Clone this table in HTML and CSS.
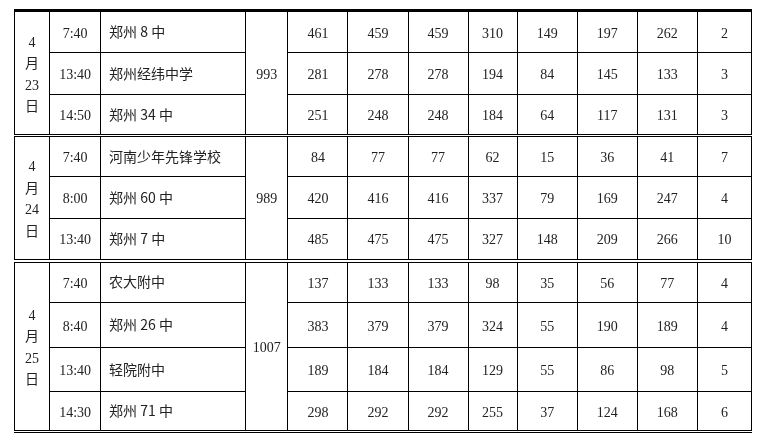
FILE: index.html
```html
<!DOCTYPE html>
<html lang="zh">
<head>
<meta charset="utf-8">
<title>考试安排</title>
<link rel="stylesheet" href="styles.css">
</head>
<body>
<table class="grid">
<colgroup>
<col class="c-date"><col class="c-time"><col class="c-name"><col class="c-total">
<col class="c-n"><col class="c-n"><col class="c-n"><col class="c-n2"><col class="c-n"><col class="c-n"><col class="c-n"><col class="c-last">
</colgroup>
<tbody class="grp g1">
<tr class="r42"><td class="date" rowspan="3">4<br>月<br>23<br>日</td><td>7:40</td><td class="name">郑州 8 中</td><td rowspan="3">993</td><td>461</td><td>459</td><td>459</td><td>310</td><td>149</td><td>197</td><td>262</td><td>2</td></tr>
<tr class="r42"><td>13:40</td><td class="name">郑州经纬中学</td><td>281</td><td>278</td><td>278</td><td>194</td><td>84</td><td>145</td><td>133</td><td>3</td></tr>
<tr class="r41"><td>14:50</td><td class="name">郑州 34 中</td><td>251</td><td>248</td><td>248</td><td>184</td><td>64</td><td>117</td><td>131</td><td>3</td></tr>
</tbody>
<tbody class="grp g2">
<tr class="r41"><td class="date" rowspan="3">4<br>月<br>24<br>日</td><td>7:40</td><td class="name">河南少年先锋学校</td><td rowspan="3">989</td><td>84</td><td>77</td><td>77</td><td>62</td><td>15</td><td>36</td><td>41</td><td>7</td></tr>
<tr class="r42"><td>8:00</td><td class="name">郑州 60 中</td><td>420</td><td>416</td><td>416</td><td>337</td><td>79</td><td>169</td><td>247</td><td>4</td></tr>
<tr class="r42"><td>13:40</td><td class="name">郑州 7 中</td><td>485</td><td>475</td><td>475</td><td>327</td><td>148</td><td>209</td><td>266</td><td>10</td></tr>
</tbody>
<tbody class="grp g3">
<tr class="r42"><td class="date" rowspan="4">4<br>月<br>25<br>日</td><td>7:40</td><td class="name">农大附中</td><td rowspan="4">1007</td><td>137</td><td>133</td><td>133</td><td>98</td><td>35</td><td>56</td><td>77</td><td>4</td></tr>
<tr class="r45"><td>8:40</td><td class="name">郑州 26 中</td><td>383</td><td>379</td><td>379</td><td>324</td><td>55</td><td>190</td><td>189</td><td>4</td></tr>
<tr class="r44"><td>13:40</td><td class="name">轻院附中</td><td>189</td><td>184</td><td>184</td><td>129</td><td>55</td><td>86</td><td>98</td><td>5</td></tr>
<tr class="r40"><td>14:30</td><td class="name">郑州 71 中</td><td>298</td><td>292</td><td>292</td><td>255</td><td>37</td><td>124</td><td>168</td><td>6</td></tr>
</tbody>
</table>
</body>
</html>
```

FILE: styles.css
```css
html, body {
  margin: 0;
  padding: 0;
  background: #ffffff;
}
body {
  padding: 9px 0 0 14px;
  -webkit-font-smoothing: antialiased;
}
.grid {
  border-collapse: collapse;
  table-layout: fixed;
  width: 738px;
  font-family: "Liberation Serif", "Noto Sans CJK SC", serif;
  font-size: 14px;
  color: #222222;
  border-top: 3px solid #000;
  border-bottom: 3px double #000;
  will-change: transform;
  transform: translateZ(0);
}
.c-date { width: 35px; }
.c-time { width: 51px; }
.c-name { width: 145px; }
.c-total { width: 42px; }
.c-n { width: 60px; }
.c-n2 { width: 49px; }
.c-last { width: 54px; }
.grid td {
  border: 1px solid #000;
  text-align: center;
  vertical-align: middle;
  padding: 3px 0 0 0;
  line-height: 20px;
}
.grid td.name {
  text-align: left;
  padding: 0 0 2px 8px;
  font-family: "Noto Sans CJK SC", sans-serif;
  font-weight: 400;
  color: #222222;
}
.grid td.date {
  line-height: 21.5px;
  padding-top: 3px;
}
.g2 tr:first-child td { border-top: 3px double #000; }
.g3 tr:first-child td { border-top: 4px double #000; }
.r40 { height: 40px; }
.r41 { height: 41px; }
.r42 { height: 42px; }
.r44 { height: 44px; }
.r45 { height: 45px; }
```
